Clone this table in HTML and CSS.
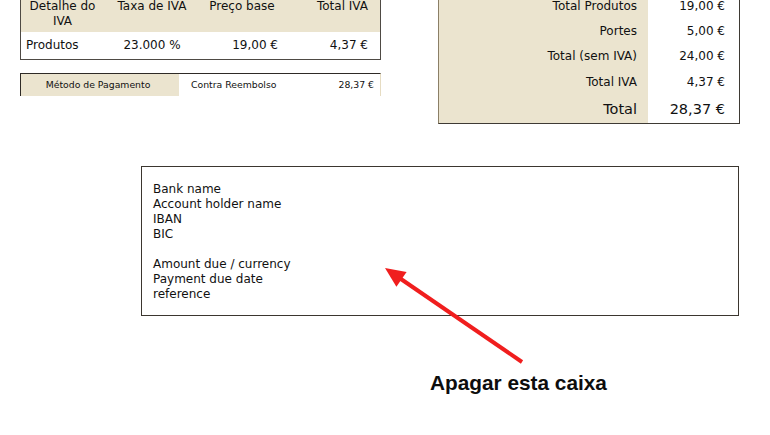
FILE: index.html
```html
<!DOCTYPE html>
<html lang="pt">
<head>
<meta charset="utf-8">
<title>Fatura</title>
<link rel="stylesheet" href="styles.css">
</head>
<body>
<div class="page">
  <div class="top">
    <div class="left">
      <div class="vat">
        <div class="vat-head">
          <div class="c1 center">Detalhe do<br>IVA</div>
          <div class="c2 center">Taxa de IVA</div>
          <div class="c3 center">Preço base</div>
          <div class="c4 right">Total IVA</div>
        </div>
        <div class="vat-row">
          <div class="c1 left-txt">Produtos</div>
          <div class="c2 center">23.000 %</div>
          <div class="c3 right">19,00 €</div>
          <div class="c4 right">4,37 €</div>
        </div>
      </div>
      <div class="pay">
        <div class="pay-label">Método de Pagamento</div>
        <div class="pay-method">Contra Reembolso</div>
        <div class="pay-amount">28,37 €</div>
      </div>
    </div>
    <div class="totals">
      <div class="t-row"><div class="t-label">Total Produtos</div><div class="t-value">19,00 €</div></div>
      <div class="t-row"><div class="t-label">Portes</div><div class="t-value">5,00 €</div></div>
      <div class="t-row"><div class="t-label">Total (sem IVA)</div><div class="t-value">24,00 €</div></div>
      <div class="t-row"><div class="t-label">Total IVA</div><div class="t-value">4,37 €</div></div>
      <div class="t-row t-grand"><div class="t-label">Total</div><div class="t-value">28,37 €</div></div>
    </div>
  </div>
  <div class="bank">
    <div class="line">Bank name</div>
    <div class="line">Account holder name</div>
    <div class="line">IBAN</div>
    <div class="line">BIC</div>
    <div class="line blank"></div>
    <div class="line">Amount due / currency</div>
    <div class="line">Payment due date</div>
    <div class="line">reference</div>
  </div>
  <div class="note">Apagar esta caixa</div>
  <svg class="arrow" width="770" height="435" viewBox="0 0 770 435" aria-hidden="true">
    <line x1="522" y1="362" x2="398" y2="277" stroke="#f01e1e" stroke-width="4"/>
    <polygon points="385,268 396.4,286.7 406.6,271.9" fill="#f01e1e"/>
  </svg>
</div>
</body>
</html>
```

FILE: styles.css
```css
html, body {
  margin: 0;
  padding: 0;
  background: #ffffff;
}

body {
  font-family: "DejaVu Sans", Verdana, sans-serif;
  color: #111111;
  width: 770px;
  height: 435px;
  overflow: hidden;
}

.page {
  position: relative;
  width: 770px;
  height: 435px;
}

.top {
  display: flex;
  align-items: flex-start;
}

.left {
  margin-left: 20px;
  width: 361px;
  display: flex;
  flex-direction: column;
}

.vat {
  margin-top: -5px;
  border: 1px solid #4e4a44;
  font-size: 12px;
  line-height: 15px;
}

.vat-head,
.vat-row {
  display: grid;
  grid-template-columns: 83px 96px 84px 96px;
}

.vat-head {
  background: #ebe4cf;
  padding: 3px 0 3px;
}

.vat-row {
  background: #ffffff;
  padding: 6px 0;
}

.center { text-align: center; }
.left-txt { text-align: left; padding-left: 5px; }
.vat-row .c3.right { text-align: right; padding-right: 6px; }
.c4.right { text-align: right; padding-right: 12px; }

.pay {
  margin-top: 13px;
  height: 22px;
  overflow: hidden;
  border-top: 1px solid #2e2a26;
  border-left: 1px solid #2e2a26;
  border-right: 1px solid #e6dcc2;
  display: grid;
  grid-template-columns: 158px 1fr auto;
  font-size: 9.3px;
  line-height: 12px;
}

.pay-label {
  background: #ebe4cf;
  text-align: center;
  padding-top: 5px;
  padding-right: 4px;
}

.pay-method {
  padding-top: 5px;
  padding-left: 12px;
}

.pay-amount {
  padding-top: 5px;
  padding-right: 6px;
}

.totals {
  margin-left: 57px;
  margin-top: -6px;
  width: 300px;
  border-left: 1px solid #8b7f66;
  border-right: 1px solid #3e3a34;
  border-bottom: 1px solid #3e3a34;
  font-size: 12px;
}

.t-row {
  display: grid;
  grid-template-columns: 209px 91px;
  line-height: 25px;
}

.t-label {
  background: #ebe4cf;
  text-align: right;
  padding-right: 11px;
}

.t-value {
  background: #ffffff;
  text-align: right;
  padding-right: 14px;
}

.t-row:nth-child(4) {
  line-height: 26px;
}

.t-grand {
  line-height: 28px;
  font-size: 14.5px;
}

.bank {
  margin-top: 42px;
  margin-left: 141px;
  width: 598px;
  height: 150px;
  box-sizing: border-box;
  border: 1px solid #3b362f;
  padding: 15px 0 0 11px;
  font-size: 12px;
  line-height: 15px;
}

.line.blank {
  height: 15px;
}

.note {
  margin-top: 55px;
  margin-left: 430px;
  font-family: "Liberation Sans", Arial, sans-serif;
  font-weight: bold;
  font-size: 20.8px;
  line-height: 24px;
  color: #0d0d0d;
}

.arrow {
  position: absolute;
  left: 0;
  top: 0;
  pointer-events: none;
}
```
